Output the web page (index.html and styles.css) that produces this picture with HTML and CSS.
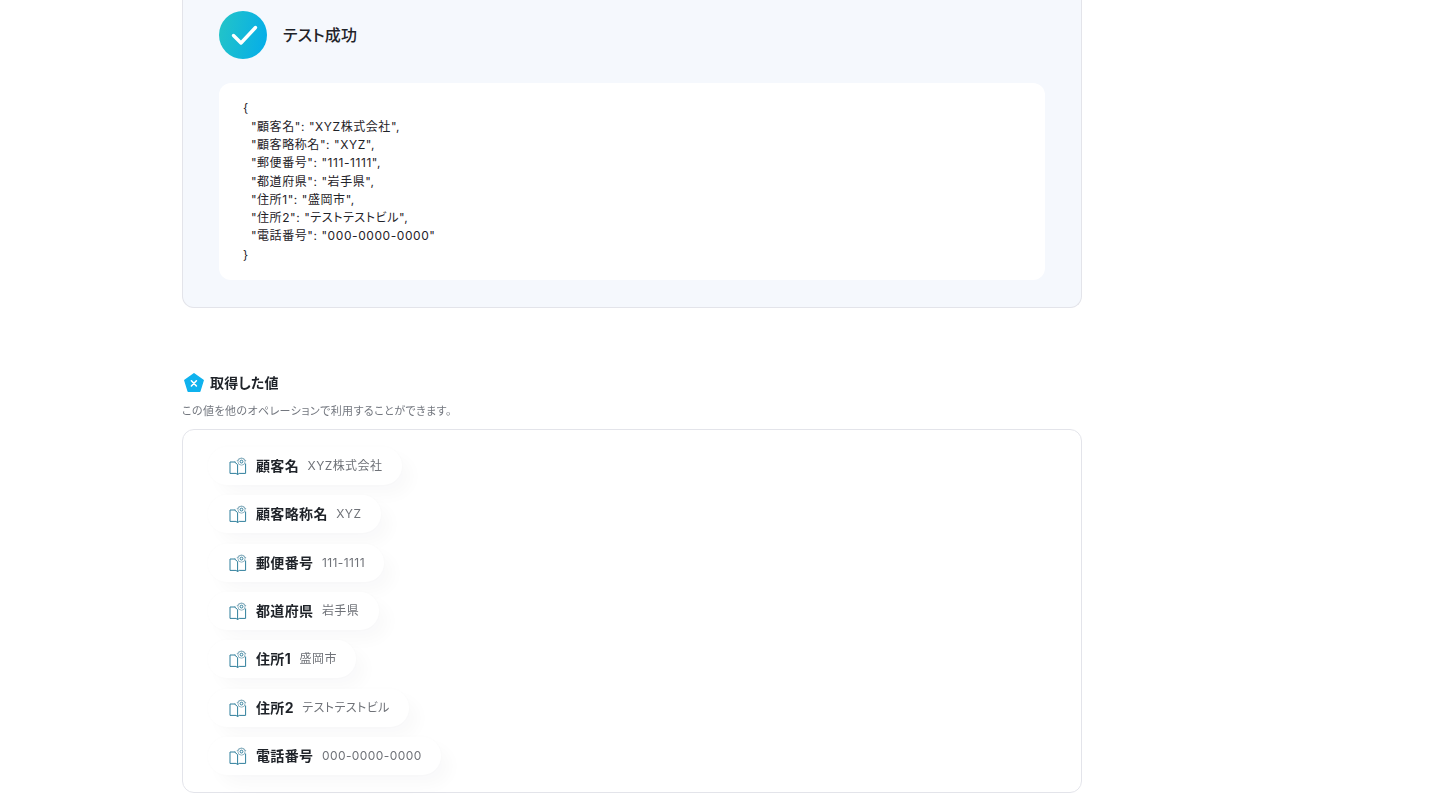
FILE: index.html
```html
<!DOCTYPE html>
<html lang="ja">
<head>
<meta charset="utf-8">
<title>テスト成功</title>
<link rel="stylesheet" href="styles.css">
</head>
<body>
<svg class="sprite" width="0" height="0" aria-hidden="true">
  <defs>
    <linearGradient id="grad" x1="0" y1="0.4" x2="1" y2="0.6">
      <stop offset="0" stop-color="#22c3c9"/>
      <stop offset="1" stop-color="#06aee8"/>
    </linearGradient>
    <symbol id="book" viewBox="0 0 18 18">
      <path d="M6.5 5 H1 V16.4 H7 L8.6 17.6 L10.2 16.4 H16.6 V6.5" fill="none" stroke="#2f7f9c" stroke-width="1" stroke-linejoin="round"/>
      <path d="M5.6 5 L8.6 7.6 V17.6" fill="none" stroke="#2f7f9c" stroke-width="1" stroke-linejoin="round"/>
      <path d="M8 4 C9.6 .6 15 .6 17 4" fill="none" stroke="#7fa9ba" stroke-width="1"/>
      <circle cx="12.5" cy="4.6" r="3.6" fill="none" stroke="#8fb4c3" stroke-width="1"/>
      <circle cx="12.5" cy="4.6" r="1.4" fill="none" stroke="#2f7f9c" stroke-width="1"/>
    </symbol>
  </defs>
</svg>
<main class="page">
  <section class="result">
    <div class="result-head">
      <svg class="check" viewBox="0 0 48 48" aria-hidden="true">
        <circle cx="24" cy="24" r="24" fill="url(#grad)"/>
        <path d="M14.5 24.5 L22 32 L36.5 16.5" fill="none" stroke="#fff" stroke-width="3.4" stroke-linecap="round" stroke-linejoin="round"/>
      </svg>
      <h2 class="result-title">テスト成功</h2>
    </div>
    <pre class="code">{
  "顧客名": "XYZ株式会社",
  "顧客略称名": "XYZ",
  "郵便番号": "111-1111",
  "都道府県": "岩手県",
  "住所1": "盛岡市",
  "住所2": "テストテストビル",
  "電話番号": "000-0000-0000"
}</pre>
  </section>

  <section class="values">
    <div class="values-head">
      <svg class="penta" viewBox="0 0 20 20" aria-hidden="true">
        <path d="M10 .8 L19.2 7.4 L15.8 18.4 H4.2 L.8 7.4 Z" fill="#0fb2ee" stroke="#0fb2ee" stroke-width="1.4" stroke-linejoin="round"/>
        <path d="M7.4 7.8 L12.4 13 M12.4 7.8 L7.4 13" stroke="#fff" stroke-width="1.6" stroke-linecap="round"/>
      </svg>
      <h3 class="values-title">取得した値</h3>
    </div>
    <p class="values-note">この値を他のオペレーションで利用することができます。</p>
    <div class="values-box">
      <div class="pill"><svg class="book"><use href="#book"/></svg><span class="name">顧客名</span><span class="val">XYZ株式会社</span></div>
      <div class="pill"><svg class="book"><use href="#book"/></svg><span class="name">顧客略称名</span><span class="val">XYZ</span></div>
      <div class="pill"><svg class="book"><use href="#book"/></svg><span class="name">郵便番号</span><span class="val">111-1111</span></div>
      <div class="pill"><svg class="book"><use href="#book"/></svg><span class="name">都道府県</span><span class="val">岩手県</span></div>
      <div class="pill"><svg class="book"><use href="#book"/></svg><span class="name">住所1</span><span class="val">盛岡市</span></div>
      <div class="pill"><svg class="book"><use href="#book"/></svg><span class="name">住所2</span><span class="val">テストテストビル</span></div>
      <div class="pill"><svg class="book"><use href="#book"/></svg><span class="name">電話番号</span><span class="val">000-0000-0000</span></div>
    </div>
  </section>
</main>
</body>
</html>
```
FILE: styles.css
```css
html, body {
  margin: 0;
  padding: 0;
  height: 794px;
  overflow: hidden;
  background: #fff;
}
body {
  font-family: Inter, "Noto Sans CJK JP", sans-serif;
  font-feature-settings: "palt";
  color: #1f2329;
}
.sprite {
  position: absolute;
}
.page {
  width: 900px;
  margin-left: 182px;
  opacity: 0.999;
}
.result {
  box-sizing: border-box;
  height: 308px;
  padding: 11px 36px 27px;
  background: #f5f8fd;
  border: 1px solid #e3e4ea;
  border-top: 0;
  border-radius: 0 0 12px 12px;
}
.result-head {
  display: flex;
  align-items: center;
  gap: 16px;
  height: 48px;
}
.check {
  width: 48px;
  height: 48px;
  flex: none;
}
.result-title {
  margin: 0;
  font-size: 16px;
  font-weight: 500;
  line-height: 24px;
  letter-spacing: 0.2px;
}
.code {
  box-sizing: border-box;
  height: 197px;
  margin: 24px 0 0;
  padding: 16.4px 24px;
  background: #fff;
  border-radius: 12px;
  font-family: Inter, "Noto Sans CJK JP", sans-serif;
  font-size: 12px;
  line-height: 18.3px;
  letter-spacing: 0.57px;
  color: #1f2329;
}
.values {
  margin-top: 65px;
}
.values-head {
  display: flex;
  align-items: center;
  gap: 6px;
  height: 20px;
  padding-left: 2px;
}
.penta {
  width: 20px;
  height: 20px;
  flex: none;
}
.values-title {
  margin: 0;
  font-size: 14px;
  font-weight: 700;
  line-height: 20px;
  letter-spacing: 0.2px;
}
.values-note {
  margin: 10px 0 0;
  font-size: 11px;
  line-height: 16px;
  letter-spacing: 0.42px;
  color: #73777f;
}
.values-box {
  box-sizing: border-box;
  height: 364px;
  margin-top: 10px;
  padding: 17px 25px 0;
  display: flex;
  flex-direction: column;
  align-items: flex-start;
  gap: 10.33px;
  border: 1px solid #e3e4ea;
  border-radius: 12px;
}
.pill {
  display: flex;
  align-items: center;
  box-sizing: border-box;
  height: 38px;
  padding: 0 19.5px 0 21px;
  background: #fff;
  border-radius: 19px;
  box-shadow: 10px 10px 22px rgba(60, 60, 90, 0.035), 0 0 8px rgba(60, 60, 90, 0.025);
}
.book {
  width: 18px;
  height: 18px;
  flex: none;
  margin-right: 9px;
}
.name {
  font-size: 14px;
  font-weight: 700;
  line-height: 20px;
  letter-spacing: 0.35px;
  color: #1f2329;
}
.val {
  margin-left: 8.5px;
  font-size: 12px;
  line-height: 20px;
  letter-spacing: 0.42px;
  color: #6f7278;
}
```
